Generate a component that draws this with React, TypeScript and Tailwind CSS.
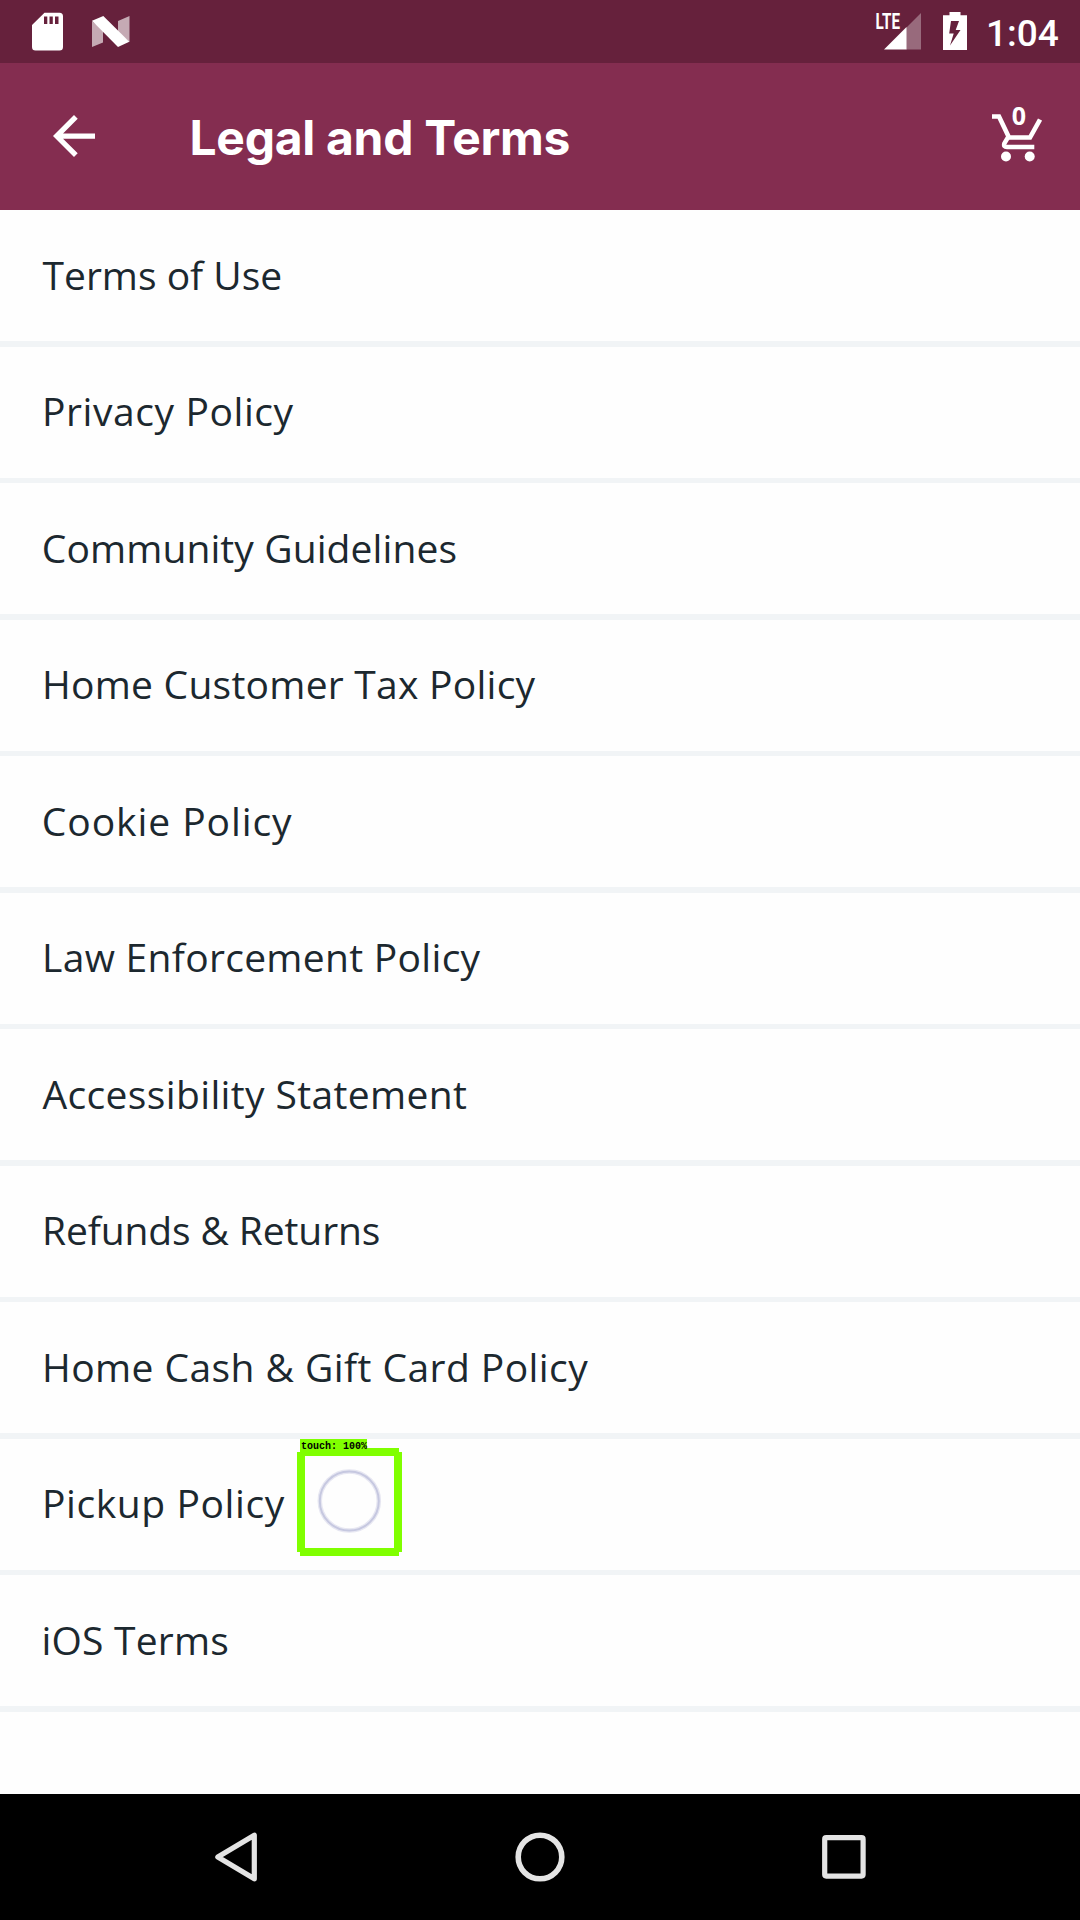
const rows = [
  { label: "Terms of Use", style: "pl-[42.5px]" },
  { label: "Privacy Policy", style: "pl-[42px] tracking-[0.58px]" },
  { label: "Community Guidelines", style: "pl-[41.8px] tracking-[0.09px]" },
  { label: "Home Customer Tax Policy", style: "pl-[42px] tracking-[0.25px]" },
  { label: "Cookie Policy", style: "pl-[41.8px] tracking-[0.93px]" },
  { label: "Law Enforcement Policy", style: "pl-[42px] tracking-[0.3px]" },
  { label: "Accessibility Statement", style: "pl-[42.5px] tracking-[0.36px]" },
  { label: "Refunds & Returns", style: "pl-[42px] tracking-[-0.12px]" },
  { label: "Home Cash & Gift Card Policy", style: "pl-[42px] tracking-[0.43px]" },
  { label: "Pickup Policy", style: "pl-[42px] tracking-[0.58px]", touched: true },
  { label: "iOS Terms", style: "pl-[41.5px] tracking-[0.2px]" },
];

function StatusBar() {
  return (
    <div className="flex h-[63px] items-start bg-[#66213c] pl-8 text-white">
      <svg className="mt-3 h-[39px] w-[31px]" viewBox="0 0 31 39" fill="currentColor">
        <path
          fillRule="evenodd"
          d="M12.5 .8H27.5Q31 .8 31 4.3V35Q31 38.5 27.5 38.5H3.5Q0 38.5 0 35V13ZM12 4.5V12H15.3V4.5ZM17.5 4.5V12H20.8V4.5ZM23 4.5V12H26.5V4.5Z"
        />
      </svg>
      <svg className="mt-4 ml-[28.5px] h-[31px] w-[38px]" viewBox="0 0 38 31" fill="currentColor">
        <path d="M0 5L11 14V26.5L0 31ZM26 5L37.5 0V26L26 17Z" opacity=".62" />
        <path d="M0 4.8L11.3 0L37.3 25.8L26 31Z" />
      </svg>
      <svg className="mt-3 ml-auto h-[38px] w-[47px] overflow-visible" viewBox="0 0 47 38" fill="currentColor">
        <path d="M46 1V37.5H31V16Z" opacity=".33" />
        <path d="M31.5 15V37.5H9Z" />
        <text
          x="0.5"
          y="17"
          fontSize="22"
          fontWeight="700"
          fontFamily="Roboto, sans-serif"
          textLength="24.5"
          lengthAdjust="spacingAndGlyphs"
        >
          LTE
        </text>
      </svg>
      <svg className="mt-3 ml-[21px] h-[38px] w-[24px]" viewBox="0 0 24 38" fill="currentColor">
        <path fillRule="evenodd" d="M6.5 0H17.5V3.2H24V38H0V3.2H6.5ZM8 9L6.2 21.5H10.7L7 33.5L17.5 18H12.7L16 9Z" />
      </svg>
      <span className="mt-3 ml-[19px] w-[94px] font-['Roboto',sans-serif] text-[37px] leading-[44px] font-medium">
        1:04
      </span>
    </div>
  );
}

function AppBar() {
  return (
    <header className="flex h-[147px] items-center bg-[#842d50] pl-[53px] text-white">
      <svg className="mb-[1px] h-[42px] w-[42px]" viewBox="4 4 16 16" fill="currentColor">
        <path d="M20 11H7.83l5.59-5.59L12 4l-8 8 8 8 1.41-1.41L7.83 13H20v-2z" />
      </svg>
      <h1 className="mt-[3px] ml-[94.5px] font-['Inter',sans-serif] text-[48px] leading-none font-bold tracking-[-0.3px]">
        Legal and Terms
      </h1>
      <div className="relative mr-[38px] mb-[5px] ml-auto h-[55px] w-[50px]">
        <svg className="h-[55px] w-[50px]" viewBox="0 0 50 55" fill="none" stroke="currentColor">
          <path d="M0 9.5H7L17 30.5H38L48 12.5" strokeWidth="4.6" />
          <path d="M16.5 29.5L12.3 36.5Q11.2 40 15 40H42.3" strokeWidth="4.4" />
          <circle cx="14" cy="49.5" r="5" fill="currentColor" stroke="none" />
          <circle cx="37.7" cy="49.5" r="5" fill="currentColor" stroke="none" />
        </svg>
        <span className="absolute -top-[5px] left-[18px] w-[18px] text-center font-['Open_Sans',sans-serif] text-[25px] leading-[26px] font-bold">
          0
        </span>
      </div>
    </header>
  );
}

function TouchMarker() {
  return (
    <div className="absolute top-0 left-[297px] h-[118px] w-[105px]">
      <svg className="h-[118px] w-[105px]" viewBox="0 0 105 118">
        <path d="M3 13H102M3 113H102M4 13V113M101 13V113" stroke="#80ff00" strokeWidth="8" />
        <circle cx="52.3" cy="62" r="29.5" fill="none" stroke="#cfcfe6" strokeWidth="4.5" opacity=".5" />
        <circle cx="52.3" cy="62" r="29.5" fill="none" stroke="#c6c8e0" strokeWidth="2" />
      </svg>
      <span className="absolute top-0 left-[3px] h-[12px] w-[67px] bg-[#80ff00] pl-[1px] font-['Liberation_Mono',monospace] text-[10px] leading-[15px] font-bold whitespace-pre text-black">
        touch: 100%
      </span>
    </div>
  );
}

function NavBar() {
  return (
    <nav className="flex h-[126px] items-center bg-black pl-[215px] text-[#e4e4e4]">
      <svg className="h-[50px] w-[43px]" viewBox="0 0 43 50" fill="none" stroke="currentColor" strokeWidth="5.2" strokeLinejoin="round">
        <path d="M2.8 25L39.3 3.2V46.8Z" />
      </svg>
      <svg className="ml-[257px] h-[50px] w-[50px]" viewBox="0 0 50 50" fill="none" stroke="currentColor" strokeWidth="5.6">
        <circle cx="25" cy="25" r="21.8" />
      </svg>
      <svg className="ml-[257px] h-[44px] w-[44px]" viewBox="0 0 44 44" fill="none" stroke="currentColor" strokeWidth="5.2">
        <rect x="2.7" y="2.7" width="38.4" height="38.4" rx="1.5" />
      </svg>
    </nav>
  );
}

export default function App() {
  return (
    <div className="flex h-[1920px] w-[1080px] flex-col overflow-hidden bg-[#fefefe]">
      <StatusBar />
      <AppBar />
      <main className="flex-1">
        {rows.map((row) => (
          <div key={row.label} className="relative flex h-[136.5px] flex-col">
            <div
              className={`flex flex-1 items-center pb-[3px] font-['Open_Sans',sans-serif] text-[39px] leading-none whitespace-nowrap text-[#1c282f] ${row.style}`}
            >
              {row.label}
            </div>
            <div className="h-[5.5px] bg-[#f1f4f6]" />
            {row.touched && <TouchMarker />}
          </div>
        ))}
      </main>
      <NavBar />
    </div>
  );
}
